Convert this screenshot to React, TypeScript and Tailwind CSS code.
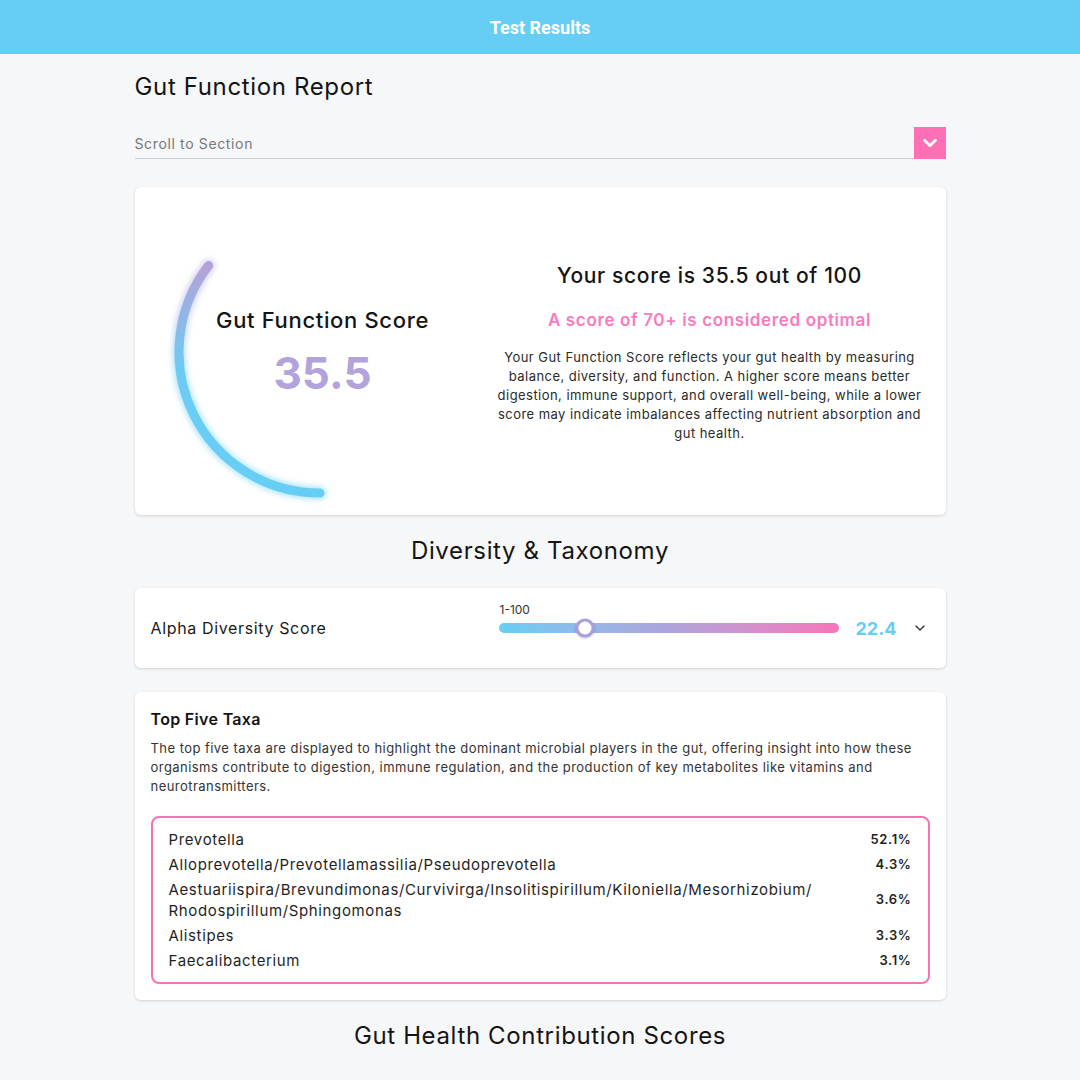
import { ChevronDown } from "lucide-react";

const taxa = [
  { name: "Prevotella", pct: "52.1%" },
  { name: "Alloprevotella/Prevotellamassilia/Pseudoprevotella", pct: "4.3%" },
  {
    name: "Aestuariispira/Brevundimonas/Curvivirga/Insolitispirillum/Kiloniella/Mesorhizobium/ Rhodospirillum/Sphingomonas",
    pct: "3.6%",
  },
  { name: "Alistipes", pct: "3.3%" },
  { name: "Faecalibacterium", pct: "3.1%" },
];

const score = 35.5;
const alpha = 22.4;

function ScoreGauge() {
  // arc starts at the bottom and runs clockwise by score% of a full circle
  const cx = 160;
  const cy = 160;
  const r = 141;
  const angle = ((90 + (score / 100) * 360) * Math.PI) / 180;
  const ex = cx + r * Math.cos(angle);
  const ey = cy + r * Math.sin(angle);
  const d = `M ${cx} ${cy + r} A ${r} ${r} 0 0 1 ${ex.toFixed(1)} ${ey.toFixed(1)}`;

  return (
    <div className="relative w-[320px] h-[320px]">
      <svg width="320" height="320" viewBox="0 0 320 320" className="overflow-visible">
        <defs>
          <linearGradient id="arcGrad" gradientUnits="userSpaceOnUse" x1="0" y1="301" x2="0" y2="75">
            <stop offset="0" stopColor="#66cef5" />
            <stop offset="0.55" stopColor="#6dcbf3" />
            <stop offset="1" stopColor="#b3a2da" />
          </linearGradient>
          <filter id="glow" x="-20%" y="-20%" width="140%" height="140%">
            <feGaussianBlur stdDeviation="3" />
          </filter>
        </defs>
        <path d={d} fill="none" stroke="url(#arcGrad)" strokeWidth="12" strokeLinecap="round" filter="url(#glow)" opacity="0.6" />
        <path d={d} fill="none" stroke="url(#arcGrad)" strokeWidth="9" strokeLinecap="round" />
      </svg>
      <div className="absolute inset-0 flex flex-col items-center justify-center pb-[4px] pl-[6px]">
        <span className="text-[22px] leading-[28px] font-medium text-[#141414] tracking-[0.03em]">Gut Function Score</span>
        <span className="mt-[17px] text-[44px] leading-none font-bold text-[#b3a3dc] tracking-normal">{score}</span>
      </div>
    </div>
  );
}

export default function App() {
  return (
    <div className="min-h-[1080px] bg-[#f6f7f9] font-[Inter,'Noto_Sans',sans-serif] tracking-[0.04em] text-[#1a1a1a]">
      {/* HEADER */}
      <header className="h-[54px] bg-[#66cef5] flex items-center justify-center">
        <h1 className="text-white text-[18px] font-bold font-[Roboto,sans-serif] tracking-normal">Test Results</h1>
      </header>

      <main className="w-[811px] mx-auto flex flex-col">
        <h2 className="mt-[18px] text-[24px] leading-[30px] font-normal text-[#141414]">Gut Function Report</h2>

        {/* SCROLL SELECT */}
        <div className="mt-[25px] flex items-end h-[32px]">
          <div className="flex-1 h-full border-b border-[#cfcfd2] flex items-center text-[14px] text-[#777] pt-[2px]">
            Scroll to Section
          </div>
          <div className="w-[32px] h-[32px] bg-[#ff6fb5] flex items-center justify-center">
            <ChevronDown size={22} strokeWidth={3} className="text-white" />
          </div>
        </div>

        {/* SCORE CARD */}
        <section className="mt-[28px] h-[328px] bg-white rounded-[6px] shadow-[0_1px_3px_rgba(0,0,0,0.15)] flex items-center">
          <div className="w-[355px] flex justify-center pl-[15px] mt-[2px]">
            <ScoreGauge />
          </div>
          <div className="flex-1 flex flex-col items-center text-center pr-[16px] mt-[2px]">
            <h3 className="text-[21px] leading-[28px] font-medium text-[#141414]">Your score is 35.5 out of 100</h3>
            <p className="mt-[18px] text-[17px] leading-[24px] font-semibold text-[#f77bbf]">
              A score of 70+ is considered optimal
            </p>
            <p className="mt-[16px] text-[13px] leading-[19px] text-[#2a2a2a] tracking-[0.035em] whitespace-nowrap">
              Your Gut Function Score reflects your gut health by measuring
              <br />
              balance, diversity, and function. A higher score means better
              <br />
              digestion, immune support, and overall well-being, while a lower
              <br />
              score may indicate imbalances affecting nutrient absorption and
              <br />
              gut health.
            </p>
          </div>
        </section>

        <h2 className="mt-[21px] text-center text-[24px] leading-[30px] text-[#141414]">Diversity &amp; Taxonomy</h2>

        {/* ALPHA DIVERSITY */}
        <section className="mt-[22px] h-[80px] bg-white rounded-[6px] shadow-[0_1px_3px_rgba(0,0,0,0.15)] flex items-center px-[16px]">
          <span className="w-[348px] text-[16px] text-[#1a1a1a]">Alpha Diversity Score</span>
          <div className="w-[340px] flex flex-col pb-[19px]">
            <span className="text-[12px] leading-[12px] text-[#333] ml-[1px] tracking-normal">1-100</span>
            <div className="relative mt-[7px] h-[10px] rounded-full bg-gradient-to-r from-[#66cef5] via-[#ada3dc] to-[#f775b9]">
              <div
                className="absolute top-1/2 -translate-x-1/2 -translate-y-1/2 w-[19px] h-[19px] rounded-full bg-white border-[3px] border-[#ab9fdb] shadow-[0_1px_3px_rgba(0,0,0,0.2)]"
                style={{ left: `${alpha + 3}%` }}
              />
            </div>
          </div>
          <span className="ml-[17px] text-[18px] font-bold text-[#66cef5] tracking-normal">{alpha}</span>
          <ChevronDown size={16} strokeWidth={2} className="ml-[16px] text-[#333]" />
        </section>

        {/* TOP FIVE TAXA */}
        <section className="mt-[24px] bg-white rounded-[6px] shadow-[0_1px_3px_rgba(0,0,0,0.15)] px-[16px] pt-[16px] pb-[16px]">
          <h3 className="text-[16px] font-semibold text-[#141414] leading-[22px] tracking-[0.02em]">Top Five Taxa</h3>
          <p className="mt-[9px] text-[13px] leading-[19px] text-[#333] tracking-[0.035em]">
            The top five taxa are displayed to highlight the dominant microbial players in the gut, offering insight into how
            these organisms contribute to digestion, immune regulation, and the production of key metabolites like vitamins
            and neurotransmitters.
          </p>
          <div className="mt-[20px] border-2 border-[#f472b6] rounded-[8px] px-[16px] py-[11px] flex flex-col gap-[4px]">
            {taxa.map((t) => (
              <div key={t.name} className="flex items-center justify-between gap-[40px]">
                <span className="text-[15px] leading-[21px] text-[#1f1f1f] max-w-[660px]">{t.name}</span>
                <span className="text-[13px] font-semibold text-[#1f1f1f]">{t.pct}</span>
              </div>
            ))}
          </div>
        </section>

        <h2 className="mt-[21px] text-center text-[24px] leading-[30px] text-[#141414]">Gut Health Contribution Scores</h2>
      </main>
    </div>
  );
}
